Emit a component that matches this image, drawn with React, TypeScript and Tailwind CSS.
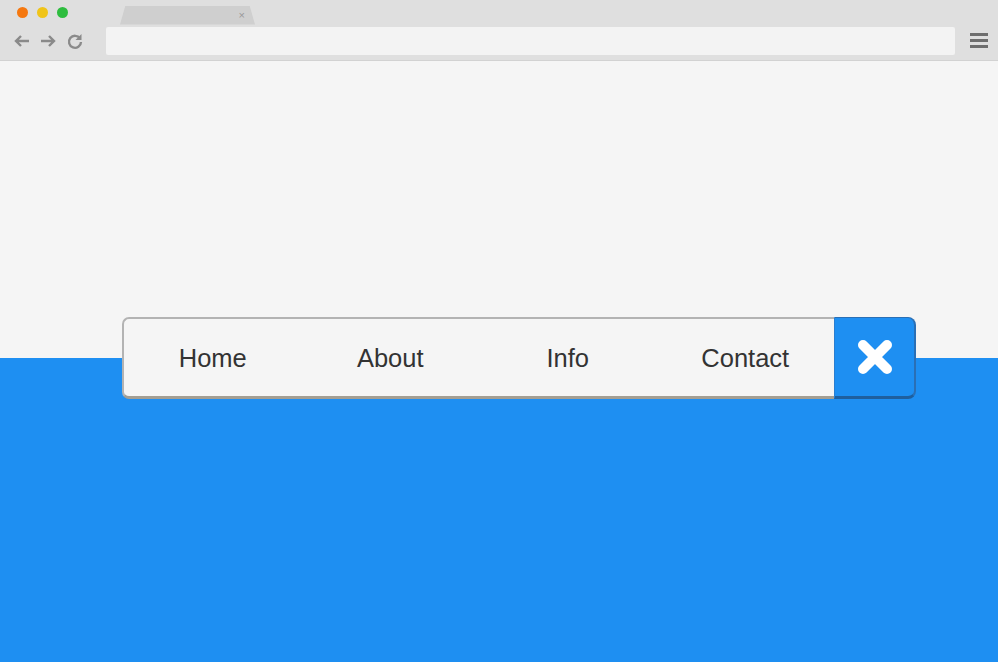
import React from 'react';

const links = ['Home', 'About', 'Info', 'Contact'];

const BrowserChrome: React.FC = () => (
  <div className="h-[61px] bg-[#dfdfdf] border-b border-[#d2d2d2] relative">
    <div className="flex items-center h-[24px] pl-[17px] gap-[9px]">
      <span className="w-[11px] h-[11px] rounded-full bg-[#f5780f]" />
      <span className="w-[11px] h-[11px] rounded-full bg-[#f0c419]" />
      <span className="w-[11px] h-[11px] rounded-full bg-[#2ebd3f]" />
      <div className="ml-[43px] mt-[6px] h-[19px] w-[135px] bg-[#cfcfcf] [clip-path:polygon(4%_0,96%_0,100%_100%,0_100%)] flex items-center justify-end pr-[10px] text-[11px] text-[#999] font-['Liberation_Sans',sans-serif]">
        ×
      </div>
    </div>
    <div className="flex items-center h-[31px] pl-[13px] pr-[10px] pt-[2px]">
      <svg width="18" height="16" viewBox="0 0 18 16" className="text-[#8a8a8a]">
        <path d="M16 8H3M8 3L3 8l5 5" stroke="currentColor" strokeWidth="2.4" fill="none" />
      </svg>
      <svg width="18" height="16" viewBox="0 0 18 16" className="ml-[8px] text-[#8a8a8a]">
        <path d="M2 8h13M10 3l5 5-5 5" stroke="currentColor" strokeWidth="2.4" fill="none" />
      </svg>
      <svg width="18" height="18" viewBox="0 0 18 18" className="ml-[9px] text-[#8a8a8a]">
        <path d="M14 6.5A6 6 0 1 0 15 10" stroke="currentColor" strokeWidth="2.4" fill="none" />
        <path d="M15.5 2v6h-6z" fill="currentColor" />
      </svg>
      <div className="ml-[22px] h-[28px] flex-1 bg-[#f3f3f3] rounded-[2px]" />
      <div className="ml-[15px] flex flex-col gap-[3px]">
        <span className="w-[18px] h-[3px] bg-[#6e6e6e]" />
        <span className="w-[18px] h-[3px] bg-[#6e6e6e]" />
        <span className="w-[18px] h-[3px] bg-[#6e6e6e]" />
      </div>
    </div>
  </div>
);

const App: React.FC = () => {
  return (
    <div className="w-[998px] h-[662px] overflow-hidden flex flex-col font-['Liberation_Sans',Arial,sans-serif]">
      <BrowserChrome />
      <div className="h-[297px] bg-[#f5f5f5]" />
      <div className="flex-1 bg-[#1e8ff2] relative">
        <nav className="absolute left-[122px] top-[-41px] w-[794px] h-[82px] flex">
          <ul className="flex flex-1 bg-[#f5f5f5] rounded-l-[7px] border-2 border-r-0 border-b-[3px] border-[#b3b3b3] border-b-[#a39e93]">
            {links.map((link) => (
              <li key={link} className="flex-1 flex items-center justify-center">
                <a className="text-[25.5px] text-[#333] pt-[1px]">{link}</a>
              </li>
            ))}
          </ul>
          <button className="w-[82px] bg-[#1e8ff2] rounded-r-[8px] border-l border-r-2 border-t border-b-[3px] border-l-[#2a7ed0] border-[#2a6fb5] border-b-[#1f5f9e] flex items-center justify-center">
            <svg width="40" height="40" viewBox="0 0 40 40">
              <path d="M8 8L32 32M32 8L8 32" stroke="white" strokeWidth="10" strokeLinecap="round" />
            </svg>
          </button>
        </nav>
      </div>
    </div>
  );
};

export default App;
